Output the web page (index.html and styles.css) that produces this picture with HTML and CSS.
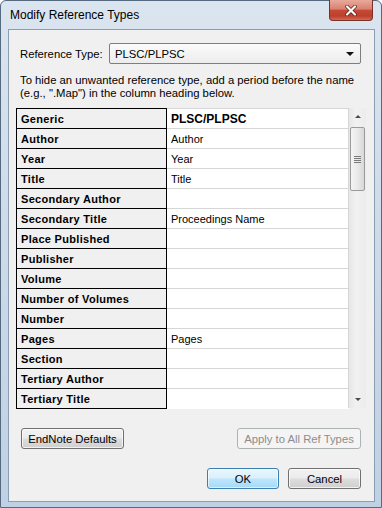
FILE: index.html
```html
<!DOCTYPE html>
<html lang="en">
<head>
  <meta charset="UTF-8" />
  <title>Modify Reference Types</title>
  <link rel="stylesheet" href="styles.css">
</head>
<body>
  <div class="window">
    <div class="titlebar">
      <span class="title">Modify Reference Types</span>
      <button class="close" type="button" aria-label="Close">
        <svg width="12" height="11" viewBox="0 0 12 11">
          <path d="M2 1.5 L10 9.5 M10 1.5 L2 9.5" stroke="#5a1a12" stroke-width="3.6" stroke-linecap="round"/>
          <path d="M2 1.5 L10 9.5 M10 1.5 L2 9.5" stroke="#fff" stroke-width="2.2" stroke-linecap="round"/>
        </svg>
      </button>
    </div>

    <div class="client">
      <div class="type-row">
        <label>Reference Type:</label>
        <div class="combo">
          <span>PLSC/PLPSC</span>
          <span class="combo-arrow"></span>
        </div>
      </div>

      <p class="hint">To hide an unwanted reference type, add a period before the name<br>(e.g., ".Map") in the column heading below.</p>

      <div class="grid-wrap">
        <table class="fields">
          <tr><td class="name">Generic</td><td class="val head">PLSC/PLPSC</td></tr>
          <tr><td class="name">Author</td><td class="val">Author</td></tr>
          <tr><td class="name">Year</td><td class="val">Year</td></tr>
          <tr><td class="name">Title</td><td class="val">Title</td></tr>
          <tr><td class="name">Secondary Author</td><td class="val"></td></tr>
          <tr><td class="name">Secondary Title</td><td class="val">Proceedings Name</td></tr>
          <tr><td class="name">Place Published</td><td class="val"></td></tr>
          <tr><td class="name">Publisher</td><td class="val"></td></tr>
          <tr><td class="name">Volume</td><td class="val"></td></tr>
          <tr><td class="name">Number of Volumes</td><td class="val"></td></tr>
          <tr><td class="name">Number</td><td class="val"></td></tr>
          <tr><td class="name">Pages</td><td class="val">Pages</td></tr>
          <tr><td class="name">Section</td><td class="val"></td></tr>
          <tr><td class="name">Tertiary Author</td><td class="val"></td></tr>
          <tr class="last"><td class="name">Tertiary Title</td><td class="val"></td></tr>
        </table>
        <div class="scrollbar">
          <div class="sb-btn"><span class="tri up"></span></div>
          <div class="thumb"><span class="grip"></span></div>
          <div class="sb-space"></div>
          <div class="sb-btn"><span class="tri down"></span></div>
        </div>
      </div>

      <div class="btn-row">
        <button class="btn btn-defaults" type="button">EndNote Defaults</button>
        <button class="btn btn-apply" type="button" disabled>Apply to All Ref Types</button>
      </div>
      <div class="btn-row end">
        <button class="btn btn-ok" type="button">OK</button>
        <button class="btn btn-cancel" type="button">Cancel</button>
      </div>
    </div>
  </div>
</body>
</html>
```

FILE: styles.css
```css
body {
  margin: 0;
  background: #fff;
  font-family: 'Liberation Sans', Arial, sans-serif;
  font-size: 11.3px;
  color: #000;
}
.window {
  width: 382px;
  height: 508px;
  box-sizing: border-box;
  padding: 0 6px 5px 7px;
  border: 1px solid #55697f;
  border-radius: 6px 6px 0 0;
  background: linear-gradient(180deg, #dbe5f0 0%, #cfdcea 40%, #bfd1e4 100%);
  display: flex;
  flex-direction: column;
}
.titlebar {
  height: 28px;
  display: flex;
  justify-content: space-between;
  align-items: flex-start;
}
.title {
  padding: 7px 0 0 2px;
  font-size: 12px;
  line-height: 15px;
  color: #000;
}
.close {
  width: 44px;
  height: 21px;
  margin: -1px 2px 0 0;
  padding: 0;
  border: 1px solid #7a3126;
  border-top: none;
  border-radius: 0 0 4px 4px;
  background: linear-gradient(180deg, #e7aa9c 0%, #d98170 45%, #c44a36 52%, #bd3f2c 80%, #d06a55 100%);
  display: flex;
  align-items: center;
  justify-content: center;
}
.client {
  flex: 1;
  border: 1px solid #8b9db1;
  background: #f0f0f0;
  display: flex;
  flex-direction: column;
}
.type-row {
  display: flex;
  align-items: center;
  margin-top: 13px;
  padding-left: 11px;
}
.type-row label {
  width: 89px;
}
.combo {
  width: 252px;
  height: 21px;
  box-sizing: border-box;
  border: 1px solid #7e7e7e;
  border-radius: 2px;
  background: linear-gradient(180deg, #fbfbfb, #ececec);
  display: flex;
  align-items: center;
  justify-content: space-between;
  padding: 0 6px 0 5px;
}
.combo-arrow {
  width: 0;
  height: 0;
  border-left: 4px solid transparent;
  border-right: 4px solid transparent;
  border-top: 4px solid #111;
}
.hint {
  margin: 10px 0 8px 0;
  padding-left: 11px;
  line-height: 13px;
  white-space: nowrap;
}
.grid-wrap {
  display: flex;
  margin-left: 7px;
  height: 300px;
}
.fields {
  border-collapse: collapse;
  table-layout: fixed;
  width: 333px;
}
.fields tr {
  height: 20px;
}
.fields td {
  padding: 0 0 0 4px;
  white-space: nowrap;
  overflow: hidden;
  font-size: 11px;
}
.fields .name {
  width: 145px;
  border: 1px solid #000;
  background: #f0f0f0;
  font-weight: bold;
  letter-spacing: 0.3px;
}
.fields .val {
  border: 1px solid #d6d6d6;
  background: #fff;
}
.fields .head {
  font-weight: bold;
  font-size: 12px;
}
.fields .last .val {
  border-bottom-color: #fff;
}
.scrollbar {
  width: 17px;
  background: linear-gradient(90deg, #e6e6e6, #f1f1f1 40%, #ececec);
  display: flex;
  flex-direction: column;
}
.sb-btn {
  height: 17px;
  display: flex;
  align-items: center;
  justify-content: center;
}
.tri {
  width: 0;
  height: 0;
  border-left: 3px solid transparent;
  border-right: 3px solid transparent;
}
.tri.up {
  border-bottom: 3px solid #4a4a4a;
}
.tri.down {
  border-top: 3px solid #4a4a4a;
}
.thumb {
  margin: 2px 1px 0 1px;
  height: 64px;
  box-sizing: border-box;
  border: 1px solid #9a9a9a;
  border-radius: 2px;
  background: linear-gradient(90deg, #f4f4f4, #e9e9e9 50%, #d8d8d8);
  display: flex;
  align-items: center;
  justify-content: center;
}
.grip {
  width: 7px;
  height: 7px;
  background: repeating-linear-gradient(180deg, #7a7a7a 0, #7a7a7a 1px, transparent 1px, transparent 2px);
}
.sb-space {
  flex: 1;
}
.btn-row {
  display: flex;
  justify-content: space-between;
  margin-top: 20px;
  padding: 0 13px 0 12px;
}
.btn-row.end {
  justify-content: flex-end;
  gap: 9px;
  margin-top: 19px;
}
.btn {
  height: 21px;
  padding: 0;
  border: 1px solid #707070;
  border-radius: 3px;
  font-family: inherit;
  font-size: 11.3px;
  color: #000;
  background: linear-gradient(180deg, #f2f2f2 0%, #ebebeb 49%, #dddddd 51%, #cfcfcf 100%);
  box-shadow: inset 0 0 0 1px rgba(255, 255, 255, 0.7);
}
.btn-defaults {
  width: 103px;
}
.btn-apply {
  width: 124px;
  border-color: #adb2b5;
  background: #f4f4f4;
  color: #8d8d8d;
  box-shadow: none;
}
.btn-ok {
  width: 72px;
  border-color: #3c7fb1;
  background: linear-gradient(180deg, #eaf6fd 0%, #d9f0fc 49%, #bee6fd 51%, #a7d9f5 100%);
  box-shadow: inset 0 0 0 1px rgba(255, 255, 255, 0.6);
}
.btn-cancel {
  width: 73px;
}
```
